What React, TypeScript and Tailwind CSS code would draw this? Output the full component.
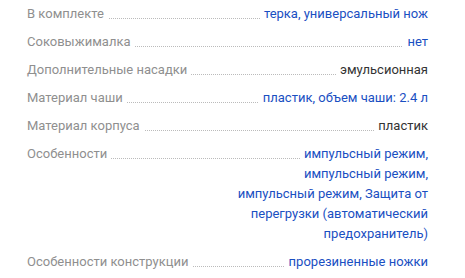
const specs: { label: string; value: string; link: boolean }[] = [
  { label: "В комплекте", value: "терка, универсальный нож", link: true },
  { label: "Соковыжималка", value: "нет", link: true },
  { label: "Дополнительные насадки", value: "эмульсионная", link: false },
  { label: "Материал чаши", value: "пластик, объем чаши: 2.4 л", link: true },
  { label: "Материал корпуса", value: "пластик", link: false },
  {
    label: "Особенности",
    value:
      "импульсный режим, импульсный режим, импульсный режим, Защита от перегрузки (автоматический предохранитель)",
    link: true,
  },
  { label: "Особенности конструкции", value: "прорезиненные ножки", link: true },
];

export default function App() {
  return (
    <div className="min-h-screen bg-white pl-[27px] pr-[37px] pt-1 font-['Roboto',sans-serif] text-[13px] leading-5">
      <dl className="flex flex-col gap-2">
        {specs.map((row) => (
          <div key={row.label} className="relative flex items-start justify-between">
            {/* dotted leader under the first line */}
            <div className="absolute inset-x-0 top-[14px] border-t border-dotted border-[#bbb]" />
            <dt className="relative shrink-0 bg-white pr-[4px] text-[#8f8f8f]">{row.label}</dt>
            <dd
              className={
                row.link
                  ? "relative max-w-[194px] text-right text-[#1a4fc2]"
                  : "relative max-w-[194px] text-right text-[#333]"
              }
            >
              <span className="bg-white pl-[4px]">{row.value}</span>
            </dd>
          </div>
        ))}
      </dl>
    </div>
  );
}
